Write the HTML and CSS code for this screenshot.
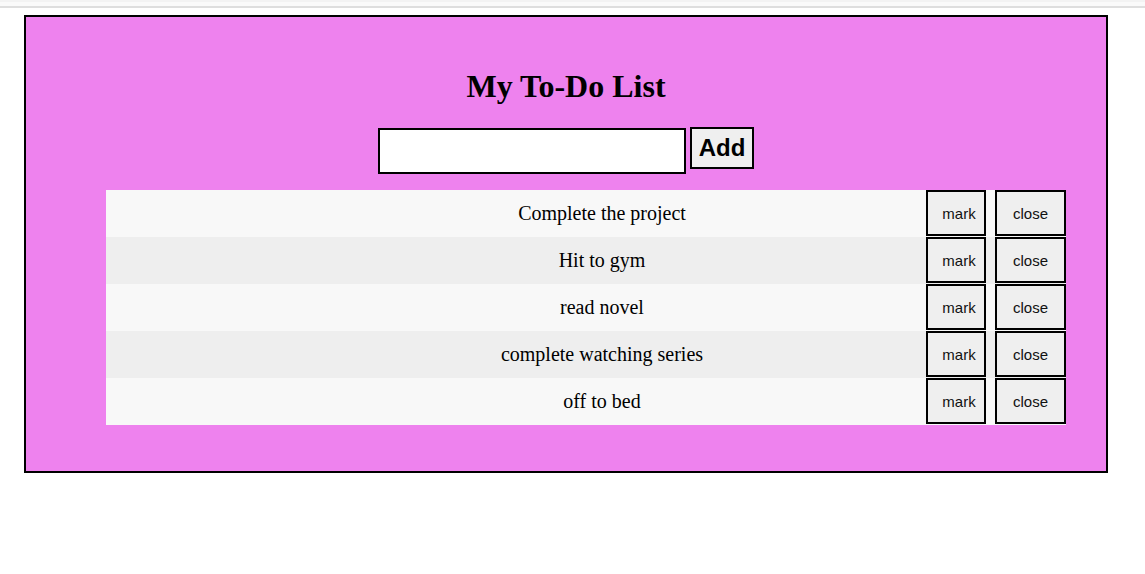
FILE: index.html
```html
<!DOCTYPE html>
<html>
<head>
<meta charset="utf-8">
<link rel="stylesheet" href="styles.css">
</head>
<body>
<div class="topbar"></div>
<div class="app">
  <h1 class="title">My To-Do List</h1>
  <div class="form">
    <input class="field" type="text">
    <button class="add">Add</button>
  </div>
  <ul class="list">
    <li class="row"><span class="text">Complete the project</span><button class="btn mark">mark</button><button class="btn close">close</button></li>
    <li class="row"><span class="text">Hit to gym</span><button class="btn mark">mark</button><button class="btn close">close</button></li>
    <li class="row"><span class="text">read novel</span><button class="btn mark">mark</button><button class="btn close">close</button></li>
    <li class="row"><span class="text">complete watching series</span><button class="btn mark">mark</button><button class="btn close">close</button></li>
    <li class="row"><span class="text">off to bed</span><button class="btn mark">mark</button><button class="btn close">close</button></li>
  </ul>
</div>
</body>
</html>
```

FILE: styles.css
```css
html, body {
  margin: 0;
  padding: 0;
  background: #fff;
}
body {
  font-family: "Liberation Serif", "Times New Roman", serif;
  color: #000;
}
.topbar {
  border-top: 2px solid #f3f3f3;
  border-bottom: 2px solid #dedede;
  background: #fafafa;
  box-sizing: border-box;
  height: 8px;
}
.app {
  margin: 7px 0 0 24px;
  width: 1084px;
  height: 458px;
  box-sizing: border-box;
  border: 2px solid #000;
  background: #ee82ee;
  padding-top: 51px;
}
.title {
  margin: 0;
  text-align: center;
  font-size: 32px;
  font-weight: bold;
  line-height: 37px;
}
.form {
  display: flex;
  justify-content: center;
  align-items: flex-start;
  gap: 4px;
  margin-top: 22px;
}
.field {
  width: 308px;
  height: 46px;
  box-sizing: border-box;
  border: 2px solid #000;
  background: #fff;
  margin: 1px 0 0 0;
  padding: 0;
}
.add {
  width: 64px;
  height: 42px;
  box-sizing: border-box;
  border: 2px solid #000;
  background: #efefef;
  font-family: "Liberation Sans", Arial, sans-serif;
  font-weight: bold;
  font-size: 24px;
  padding: 0;
  margin: 0;
}
.list {
  list-style: none;
  margin: 16px 0 0 80px;
  padding: 0;
  width: 960px;
}
.row {
  display: flex;
  align-items: center;
  height: 47px;
  background: #f8f8f8;
}
.row:nth-child(even) {
  background: #eeeeee;
}
.text {
  flex: 1;
  text-align: center;
  padding-left: 172px;
  font-size: 20px;
}
.btn {
  height: 46px;
  box-sizing: border-box;
  border: 2px solid #000;
  background: #efefef;
  font-family: "Liberation Sans", Arial, sans-serif;
  font-size: 15px;
  color: #111;
  padding: 0;
  margin: 0;
  align-self: flex-start;
}
.mark {
  width: 60px;
  padding-left: 6px;
}
.close {
  width: 71px;
  margin-left: 9px;
}
```
